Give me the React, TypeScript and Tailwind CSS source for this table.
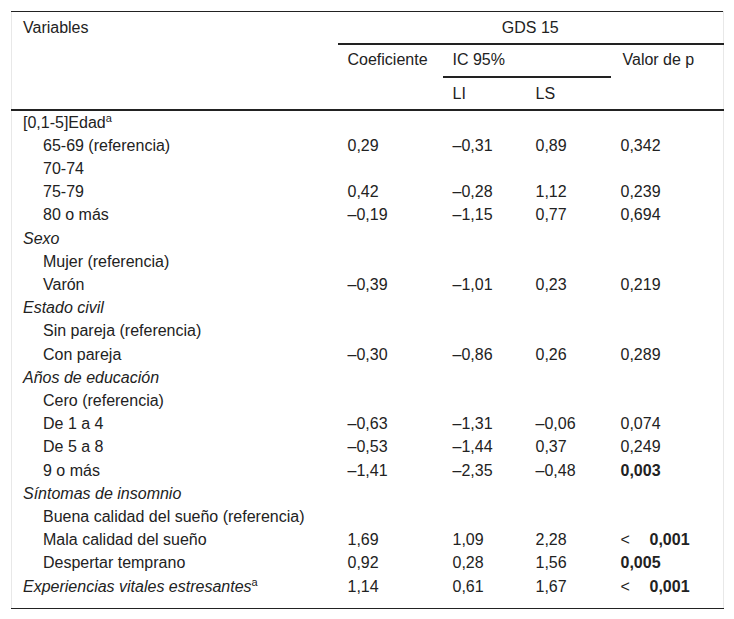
const rows: {
  label: string;
  sup?: boolean;
  kind: "group" | "italic" | "item";
  coef?: string;
  li?: string;
  ls?: string;
  p?: string;
  bold?: boolean;
  lt?: boolean;
}[] = [
  { label: "[0,1-5]Edad", sup: true, kind: "group" },
  { label: "65-69 (referencia)", kind: "item", coef: "0,29", li: "–0,31", ls: "0,89", p: "0,342" },
  { label: "70-74", kind: "item" },
  { label: "75-79", kind: "item", coef: "0,42", li: "–0,28", ls: "1,12", p: "0,239" },
  { label: "80 o más", kind: "item", coef: "–0,19", li: "–1,15", ls: "0,77", p: "0,694" },
  { label: "Sexo", kind: "italic" },
  { label: "Mujer (referencia)", kind: "item" },
  { label: "Varón", kind: "item", coef: "–0,39", li: "–1,01", ls: "0,23", p: "0,219" },
  { label: "Estado civil", kind: "italic" },
  { label: "Sin pareja (referencia)", kind: "item" },
  { label: "Con pareja", kind: "item", coef: "–0,30", li: "–0,86", ls: "0,26", p: "0,289" },
  { label: "Años de educación", kind: "italic" },
  { label: "Cero (referencia)", kind: "item" },
  { label: "De 1 a 4", kind: "item", coef: "–0,63", li: "–1,31", ls: "–0,06", p: "0,074" },
  { label: "De 5 a 8", kind: "item", coef: "–0,53", li: "–1,44", ls: "0,37", p: "0,249" },
  { label: "9 o más", kind: "item", coef: "–1,41", li: "–2,35", ls: "–0,48", p: "0,003", bold: true },
  { label: "Síntomas de insomnio", kind: "italic" },
  { label: "Buena calidad del sueño (referencia)", kind: "item" },
  { label: "Mala calidad del sueño", kind: "item", coef: "1,69", li: "1,09", ls: "2,28", p: "0,001", bold: true, lt: true },
  { label: "Despertar temprano", kind: "item", coef: "0,92", li: "0,28", ls: "1,56", p: "0,005", bold: true },
  { label: "Experiencias vitales estresantes", sup: true, kind: "italic", coef: "1,14", li: "0,61", ls: "1,67", p: "0,001", bold: true, lt: true },
];

export default function App() {
  return (
    <div className="min-h-[619px] bg-white pt-[11px] pl-[11px] text-[16px] text-[#222] font-['Liberation_Sans',Arial,sans-serif]">
      <table className="w-[712px] table-fixed border-collapse border-x border-x-[#e8e8e8] border-t border-t-[#222] border-b border-b-[#222]">
        <colgroup>
          <col className="w-[326px]" />
          <col className="w-[105px]" />
          <col className="w-[83px]" />
          <col className="w-[85px]" />
          <col className="w-[113px]" />
        </colgroup>
        <thead className="leading-[20px]">
          <tr className="h-[32px]">
            <td rowSpan={3} className="align-top pl-[11px] pt-[6px] border-b-2 border-b-[#222]">
              Variables
            </td>
            <td colSpan={4} className="text-center align-top pt-[6px] border-b-2 border-b-[#222]">
              GDS 15
            </td>
          </tr>
          <tr className="h-[33px]">
            <td rowSpan={2} className="align-top pl-[10px] pt-[5px] border-b-2 border-b-[#222]">
              Coeficiente
            </td>
            <td colSpan={2} className="align-top pl-[10px] pt-[5px] border-b-2 border-b-[#222]">
              IC 95%
            </td>
            <td rowSpan={2} className="align-top pl-[12px] pt-[5px] border-b-2 border-b-[#222]">
              Valor de p
            </td>
          </tr>
          <tr className="h-[33px]">
            <td className="align-top pl-[10px] pt-[6px] border-b-2 border-b-[#222]">LI</td>
            <td className="align-top pl-[10px] pt-[6px] border-b-2 border-b-[#222]">LS</td>
          </tr>
        </thead>
        <tbody>
          {rows.map((r, i) => {
            const last = i === rows.length - 1;
            const pad = last ? "pb-[10px]" : "";
            return (
              <tr key={i} className="leading-[23.2px]">
                <td
                  className={`${r.kind === "item" ? "pl-[31px]" : "pl-[11px]"} ${
                    r.kind === "italic" ? "italic" : ""
                  } whitespace-nowrap align-top ${pad}`}
                >
                  {r.label}
                  {r.sup && <sup className="text-[11px] not-italic leading-none">a</sup>}
                </td>
                <td className={`pl-[10px] align-top ${pad}`}>{r.coef}</td>
                <td className={`pl-[10px] align-top ${pad}`}>{r.li}</td>
                <td className={`pl-[10px] align-top ${pad}`}>{r.ls}</td>
                <td className={`pl-[10px] align-top ${pad} ${r.bold ? "font-bold" : ""}`}>
                  {r.lt && <span className="inline-block w-[29px] font-normal">&lt;</span>}
                  {r.p}
                </td>
              </tr>
            );
          })}
        </tbody>
      </table>
    </div>
  );
}
